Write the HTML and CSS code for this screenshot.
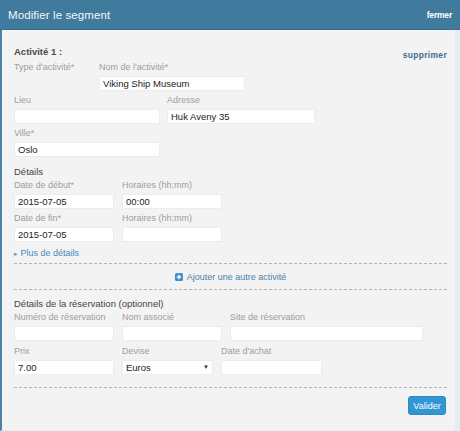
FILE: index.html
```html
<!DOCTYPE html>
<html lang="fr">
<head>
<meta charset="utf-8">
<title>Modifier le segment</title>
<link rel="stylesheet" href="styles.css">
</head>
<body>
<div class="dialog">
  <div class="header">
    <span class="title">Modifier le segment</span>
    <span class="close">fermer</span>
  </div>
  <div class="content">
    <div class="act-head">
      <span class="heading strong">Activité 1 :</span>
      <span class="remove">supprimer</span>
    </div>
    <div class="row row-a">
      <div class="field"><div class="label">Type d'activité*</div></div>
      <div class="field"><div class="label">Nom de l'activité*</div><div class="input">Viking Ship Museum</div></div>
    </div>
    <div class="row row-b">
      <div class="field"><div class="label">Lieu</div><div class="input"></div></div>
      <div class="field"><div class="label">Adresse</div><div class="input">Huk Aveny 35</div></div>
    </div>
    <div class="row row-c">
      <div class="field"><div class="label">Ville*</div><div class="input">Oslo</div></div>
    </div>
    <div class="heading sub">Détails</div>
    <div class="row row-d">
      <div class="field"><div class="label">Date de début*</div><div class="input">2015-07-05</div></div>
      <div class="field"><div class="label">Horaires (hh:mm)</div><div class="input">00:00</div></div>
    </div>
    <div class="row row-d">
      <div class="field"><div class="label">Date de fin*</div><div class="input">2015-07-05</div></div>
      <div class="field"><div class="label">Horaires (hh:mm)</div><div class="input"></div></div>
    </div>
    <div class="more"><span class="tri">&#9656;</span> Plus de détails</div>
    <div class="sep"></div>
    <div class="add">
      <svg class="add-icon" width="8" height="8" viewBox="0 0 8 8"><rect x="0" y="0" width="8" height="8" rx="1.5" fill="#3f8fcb"/><path d="M4 1.8V6.2M1.8 4H6.2" stroke="#fff" stroke-width="1.4"/></svg>
      <span>Ajouter une autre activité</span>
    </div>
    <div class="sep sep2"></div>
    <div class="heading sub2">Détails de la réservation (optionnel)</div>
    <div class="row row-e">
      <div class="field"><div class="label">Numéro de réservation</div><div class="input"></div></div>
      <div class="field"><div class="label">Nom associé</div><div class="input"></div></div>
      <div class="field"><div class="label">Site de réservation</div><div class="input"></div></div>
    </div>
    <div class="row row-f">
      <div class="field"><div class="label">Prix</div><div class="input">7.00</div></div>
      <div class="field"><div class="label">Devise</div><div class="input select"><span>Euros</span><span class="caret">&#9660;</span></div></div>
      <div class="field"><div class="label">Date d'achat</div><div class="input"></div></div>
    </div>
    <div class="sep sep3"></div>
    <div class="actions"><button class="btn">Valider</button></div>
  </div>
</div>
</body>
</html>
```
FILE: styles.css
```css
* { box-sizing: border-box; }
html, body { margin: 0; padding: 0; background: #ffffff; }
body { font-family: "Liberation Sans", Arial, Helvetica, sans-serif; font-size: 9px; color: #333; }

.dialog { width: 460px; height: 431px; display: flex; flex-direction: column; }

.header {
  height: 30px;
  background: #407a9d;
  border-bottom: 1px solid #376d8d;
  display: flex; align-items: center; justify-content: space-between;
  padding: 0 8px 0 8px;
  color: #fff;
}
.title { font-size: 11.5px; letter-spacing: 0.1px; color: #f4f7fa; }
.close { font-size: 8.5px; font-weight: bold; letter-spacing: -0.2px; }

.content {
  flex: 1;
  background: #f3f3f3;
  border-left: 2px solid #4d81a6;
  border-right: 5px solid #e5ecf2;
  border-bottom: 1px solid #e5ecf2;
  padding: 16px 8px 0 12px;
  display: flex; flex-direction: column;
}

.act-head { display: flex; justify-content: space-between; align-items: center; height: 12px; }
.heading { font-size: 9.5px; line-height: 12px; height: 12px; color: #444; white-space: nowrap; }
.strong { font-weight: bold; color: #4a4a4a; }
.remove { font-size: 8.5px; font-weight: bold; color: #3d6e8e; letter-spacing: 0.3px; padding-top: 6px; }

.row { display: grid; column-gap: 7px; margin-top: 3px; }
.row-a { grid-template-columns: 78px 146px; margin-top: 3px; }
.row-b { grid-template-columns: 146px 148px; }
.row-c { grid-template-columns: 146px; }
.row-d { grid-template-columns: 100px 100px; column-gap: 8px; }
.row-e { grid-template-columns: 100px 100px 193px; column-gap: 8px; }
.row-f { grid-template-columns: 100px 91px 101px; column-gap: 8px; margin-top: 4px; }

.field { display: flex; flex-direction: column; }
.label { font-size: 9px; line-height: 12px; height: 12px; color: #9d9d9d; margin-bottom: 3px; white-space: nowrap; }
.input {
  height: 15px;
  background: #fff;
  border: 1px solid #ececec;
  border-radius: 1px;
  padding: 0 3px;
  font-size: 9.5px;
  line-height: 13px;
  color: #222;
  white-space: nowrap;
}
.select { display: flex; justify-content: space-between; align-items: center; }
.caret { font-size: 6px; color: #333; }

.sub { margin-top: 9px; height: 12px; }
.sub + .row { margin-top: 1px; }

.more { margin-top: 5px; line-height: 12px; height: 12px; font-size: 9px; color: #4a88bb; }
.tri { font-size: 7px; color: #6d94b4; }

.sep { border-top: 1px dashed #b4b4b4; margin-top: 4px; height: 0; }
.add { margin-top: 7px; height: 12px; display: flex; align-items: center; justify-content: center; gap: 4px; font-size: 9px; color: #4f7ea4; }
.add-icon { display: block; }
.sep2 { margin-top: 6px; }
.sub2 { margin-top: 8px; }
.sub2 + .row { margin-top: 1px; }
.sep3 { margin-top: 12px; }

.actions { display: flex; justify-content: flex-end; margin-top: 8px; }
.btn {
  width: 38px; height: 19px;
  background: #3196d3;
  border: 1px solid #2a88c2;
  border-radius: 3px;
  color: #fff;
  font-family: "Liberation Sans", Arial, sans-serif;
  font-size: 9px;
  padding: 0;
  margin-right: 1px;
}
```
